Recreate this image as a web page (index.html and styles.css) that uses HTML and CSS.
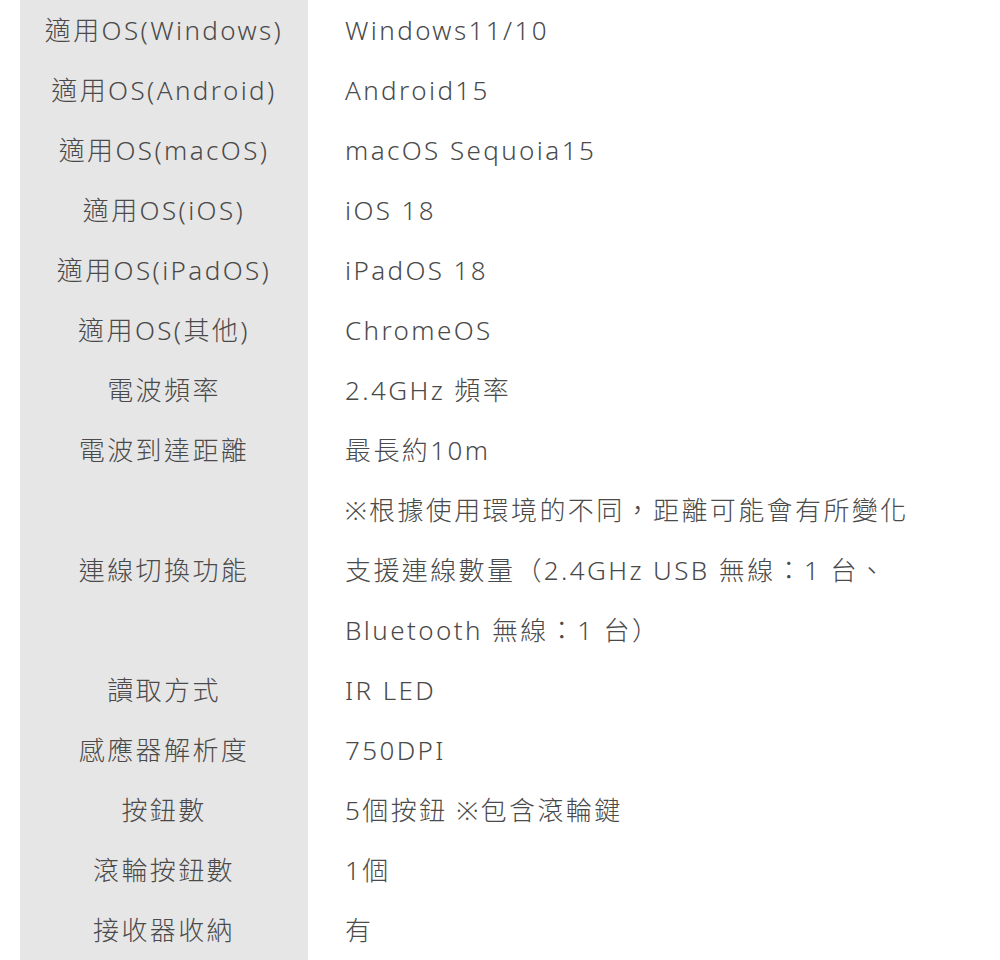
FILE: index.html
```html
<!DOCTYPE html>
<html lang="zh-Hant">
	<head>
		<title>規格</title>
		<meta charset="UTF-8" />
		<link rel="stylesheet" href="styles.css">
	</head>
	<body>
		<table class="spec-table">
			<tr><th>適用OS(Windows)</th><td>Windows11/10</td></tr>
			<tr><th>適用OS(Android)</th><td>Android15</td></tr>
			<tr><th>適用OS(macOS)</th><td>macOS Sequoia15</td></tr>
			<tr><th>適用OS(iOS)</th><td>iOS 18</td></tr>
			<tr><th>適用OS(iPadOS)</th><td>iPadOS 18</td></tr>
			<tr><th>適用OS(其他)</th><td>ChromeOS</td></tr>
			<tr><th>電波頻率</th><td>2.4GHz 頻率</td></tr>
			<tr><th>電波到達距離</th><td>最長約10m</td></tr>
			<!-- 3-line row -->
			<tr>
				<th>連線切換功能</th>
				<td>※根據使用環境的不同，距離可能會有所變化<br>支援連線數量（2.4GHz USB 無線：1 台、<br>Bluetooth 無線：1 台）</td>
			</tr>
			<tr><th>讀取方式</th><td>IR LED</td></tr>
			<tr><th>感應器解析度</th><td>750DPI</td></tr>
			<tr><th>按鈕數</th><td>5個按鈕 ※包含滾輪鍵</td></tr>
			<tr><th>滾輪按鈕數</th><td>1個</td></tr>
			<tr><th>接收器收納</th><td>有</td></tr>
		</table>
	</body>
</html>
```
FILE: styles.css
```css
body {
	margin: 0;
	background: #fff;
	font-family: "Noto Sans", "Noto Sans CJK TC", sans-serif;
	color: #4a4a4a;
}

.spec-table {
	margin-left: 20px;
	border-collapse: collapse;
	font-size: 26px;
	font-weight: 300;
	letter-spacing: 2.4px;
	line-height: 60px;
}

.spec-table th {
	width: 288px;
	padding: 0;
	background-color: #e6e6e6;
	font-weight: 300;
	text-align: center;
	vertical-align: middle;
	white-space: nowrap;
}

.spec-table td {
	padding: 0 0 0 37px;
	text-align: left;
	white-space: nowrap;
}
```
